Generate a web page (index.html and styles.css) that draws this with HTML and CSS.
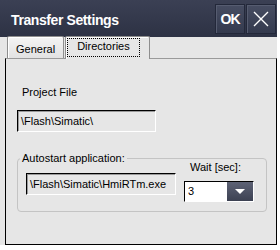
FILE: index.html
```html
<!DOCTYPE html>
<html lang="en">
<head>
    <meta charset="UTF-8">
    <title>Transfer Settings</title>
    <link rel="stylesheet" href="styles.css">
</head>
<body>
<div class="window">
    <div class="titlebar">
        <span class="title">Transfer Settings</span>
        <div class="title-buttons">
            <button class="tbtn ok">OK</button>
            <button class="tbtn close">
                <svg width="16" height="16" viewBox="0 0 16 16">
                    <path d="M1 1 L15 15 M15 1 L1 15" stroke="#fff" stroke-width="1.4" fill="none"/>
                </svg>
            </button>
        </div>
    </div>

    <div class="tabs">
        <div class="tab">General</div>
        <div class="tab active"><span class="focus">Directories</span></div>
    </div>

    <div class="panel">
        <p class="label">Project File</p>
        <div class="field wide">\Flash\Simatic\</div>

        <fieldset class="group">
            <legend>Autostart application:</legend>
            <div class="group-row">
                <div class="field app">\Flash\Simatic\HmiRTm.exe</div>
                <div class="wait">
                    <span class="wait-label">Wait [sec]:</span>
                    <div class="combo">
                        <span class="combo-value">3</span>
                        <span class="combo-btn"><span class="arrow"></span></span>
                    </div>
                </div>
            </div>
        </fieldset>
    </div>
</div>
</body>
</html>
```

FILE: styles.css
```css
body {
    margin: 0;
    background-color: #fff;
    font-family: "Liberation Sans", Arial, sans-serif;
    font-size: 11px;
    color: #000;
}

.window {
    width: 277px;
    height: 245px;
    background-color: #e6e6e6;
}

.titlebar {
    height: 37px;
    display: flex;
    align-items: center;
    justify-content: space-between;
    background: linear-gradient(#3b4054, #2d3244);
}

.title {
    padding-left: 11px;
    padding-top: 3px;
    color: #fff;
    font-weight: bold;
    font-size: 14px;
    letter-spacing: -0.4px;
}

.title-buttons {
    display: flex;
    gap: 1px;
    padding-right: 1px;
}

.tbtn {
    width: 30px;
    height: 30px;
    padding: 0;
    display: flex;
    align-items: center;
    justify-content: center;
    border: 1px solid #23283a;
    background: linear-gradient(#474d62, #343a4e);
    box-shadow: inset 1px 1px 0 #565c70;
    color: #fff;
}

.ok {
    font-family: "Liberation Sans", Arial, sans-serif;
    font-weight: bold;
    font-size: 14px;
    letter-spacing: -1px;
}

.tabs {
    height: 21px;
    display: flex;
    align-items: flex-end;
    padding-left: 7px;
}

.tab {
    height: 18px;
    padding: 3px 8px 0;
    display: flex;
    align-items: center;
    border: 1px solid #8e8e8e;
    border-bottom: none;
    border-radius: 2px 2px 0 0;
    background: linear-gradient(#f4f4f4, #e2e2e2);
    box-shadow: inset 1px 1px 0 #fff;
}

.tab.active {
    height: 22px;
    margin-left: 1px;
    padding: 0 9px 0 1px;
    align-items: flex-start;
    background: #e6e6e6;
    margin-bottom: -1px;
}

.focus {
    height: 19px;
    display: flex;
    align-items: center;
    padding: 0 9px 3px;
    box-sizing: border-box;
    border: 1px dotted #000;
    margin-top: 1px;
}

.panel {
    margin-left: 5px;
    height: 185px;
    border: 1px solid #000;
    border-top: 1px solid #9a9a9a;
    padding: 0 0 0 11px;
}

.label {
    margin: 0;
    padding: 27px 0 0 5px;
    line-height: 13px;
}

.field {
    height: 20px;
    line-height: 20px;
    padding: 0 3px;
    border-top: 1px solid #000;
    border-left: 1px solid #000;
    border-bottom: 1px solid #fff;
    border-right: 1px solid #fff;
    box-shadow: inset 1px 1px 0 #9a9a9a;
    white-space: nowrap;
    overflow: hidden;
}

.wide {
    width: 131px;
    margin-top: 11px;
}

.group {
    width: 240px;
    margin: 20px 0 0;
    padding: 0 0 9px 8px;
    border: 1px solid #c4c4c4;
    border-radius: 4px;
}

.group legend {
    margin-left: -6px;
    padding: 0 2px;
    line-height: 13px;
}

.group-row {
    display: flex;
    gap: 8px;
}

.app {
    width: 142px;
    margin-top: 8px;
}

.wait {
    display: flex;
    flex-direction: column;
    margin-top: -4px;
}

.wait-label {
    padding-left: 6px;
    line-height: 13px;
}

.combo {
    width: 70px;
    height: 21px;
    margin-top: 7px;
    display: flex;
    border-top: 1px solid #000;
    border-left: 1px solid #000;
    border-bottom: 1px solid #fff;
    border-right: 1px solid #fff;
    box-sizing: border-box;
}

.combo-value {
    flex: 1;
    background-color: #fff;
    padding-left: 3px;
    line-height: 19px;
}

.combo-btn {
    width: 26px;
    display: flex;
    align-items: center;
    justify-content: center;
    background: linear-gradient(#5d6275, #3c4152);
}

.arrow {
    width: 0;
    height: 0;
    border-left: 5px solid transparent;
    border-right: 5px solid transparent;
    border-top: 5px solid #fff;
}
```
